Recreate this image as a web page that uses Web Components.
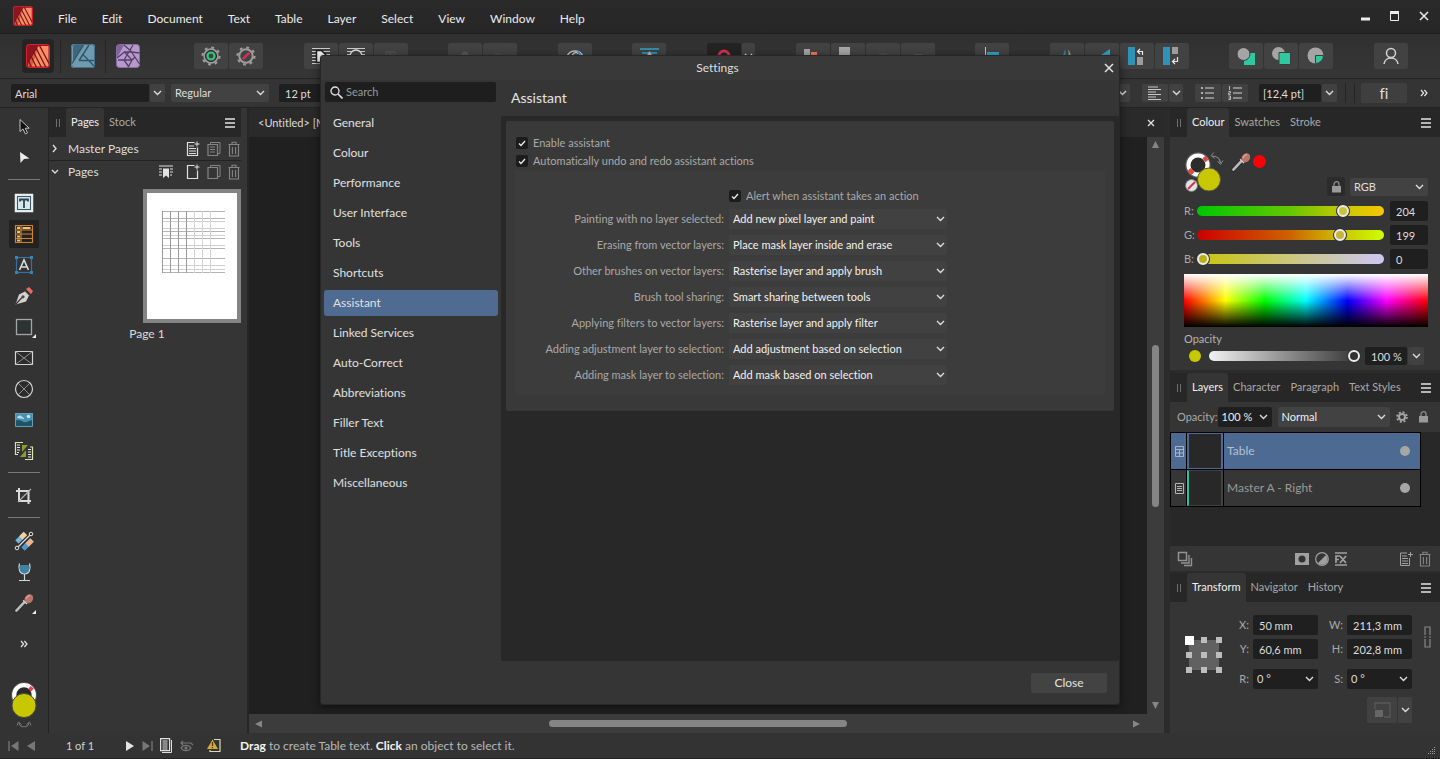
<!DOCTYPE html>
<html lang="en-GB">
<head>
<meta charset="utf-8">
<title>Settings</title>
<style>
html,body{height:100%}
body{margin:0;background:#333;color:#dedede;font:12px/16px Lato,"Open Sans",sans-serif;font-variant-ligatures:none;overflow:hidden}
</style>
</head>
<body>
<pub-app></pub-app>
<script>
const BASE = `
*,*::before,*::after{box-sizing:border-box}
:host{display:block;box-sizing:border-box}
button,input,select{font:inherit;color:inherit;border:0;margin:0;padding:0;background:none;border-radius:0;outline:0;min-width:0}
button{display:inline-flex;align-items:center;justify-content:center}
select{appearance:none}
svg{display:block;flex:none}
.pick{display:grid;background:#424242;border-radius:2px;height:18px;align-items:center}
.pick.dark{background:#1f1f1f}
.pick select{grid-area:1/1;width:100%;height:100%;padding:0 16px 0 4px}
.pick svg{grid-area:1/1;justify-self:end;margin-right:4px;pointer-events:none}
.fld{background:#1f1f1f;border-radius:2px;height:18px;padding:0 0 0 6px;width:100%}
`;

function define(tag, css, html) {
  customElements.define(tag, class extends HTMLElement {
    connectedCallback() {
      if (this.shadowRoot) return;
      const root = this.attachShadow({ mode: 'open' });
      const markup = typeof html === 'function' ? html(this) : html;
      root.innerHTML = `<style>${BASE}${css}</style>${markup}`;
    }
  });
}

const svg = (w, h, body, extra = '') =>
  `<svg width="${w}" height="${h}" viewBox="0 0 ${w} ${h}" fill="none" aria-hidden="true" ${extra}>${body}</svg>`;

const chevron = svg(9, 6, '<path d="M1 1l3.5 3.5L8 1" stroke="#dcdcdc" stroke-width="1.4"/>');
const more = svg(8, 8, '<path d="M1 1l2.6 3L1 7M4.4 1L7 4 4.4 7" stroke="#e6e6e6" stroke-width="1.2"/>');
const trash = svg(12, 16, '<path d="M.5 3.5h11M4 3V1.2h4V3M1.5 4v11h9V4M4.4 6v7M7.6 6v7" stroke="#858585" stroke-width="1.1"/>');
const lock = svg(9, 12, '<path d="M2 5V3.2a2.5 2.5 0 0 1 5 0V5" stroke="#8c8c8c" stroke-width="1.3"/><rect y="5" width="9" height="6.5" fill="#9a9a9a"/>');
const dropper = svg(20, 20, '<path d="M2.4 17.6l8-8.4" stroke="#2a2a2a" stroke-width="4" stroke-linecap="round"/><path d="M2.4 17.6l8-8.4" stroke="#b9bcbd" stroke-width="2.6" stroke-linecap="round"/><path d="M9.2 7.2l3.8 3.8" stroke="#d8d0cc" stroke-width="1.6"/><path d="M10.4 7.2C10.6 3.4 13.6.6 17 1.4c2.6.8 2.6 4.6 1 6.8-1.4 1.8-3.6 2.4-5 1.8z" fill="#b8766a"/><path d="M12 6c.6-1.8 2-3.2 4-3.4" stroke="#d9a396" stroke-width="1.3"/>');
const pubMark = (s) => svg(s, s, `<g transform="scale(${s / 24})"><rect width="24" height="24" rx="3" fill="#8c1620"/><path d="M12.5 2H22.5V22.5H4.5L2.5 20z" fill="#ff8a66"/><path d="M12.5 2L2 20v2.5h4z" fill="#e0583f"/><path d="M2.5 16.5l3 7M5 12l5.5 11.5M7.5 8l8 15.5M10 4l10 19.5M13.5 1.5L23 19.5" stroke="#6a1c14" stroke-width="1.3"/><rect x=".5" y=".5" width="23" height="23" rx="3" stroke="#d8232f"/></g>`);
const gear = (inner) => svg(20, 20, `<circle cx="10" cy="10" r="6.7" stroke="#9c9c9c" stroke-width="2"/><circle cx="10" cy="10" r="8.5" stroke="#9c9c9c" stroke-width="2.2" stroke-dasharray="2.8 3.875"/>${inner}`);

const pick = (value, { id = '', cls = '', label = '' }) =>
  `<span class="pick ${cls}"><select ${id ? `id="${id}"` : `aria-label="${label}"`}><option>${value}</option></select>${chevron}</span>`;
const field = (value, { id = '', cls = '', label = '' }) =>
  `<input type="text" class="fld ${cls}" ${id ? `id="${id}"` : `aria-label="${label}"`} value="${value}">`;

/* ---------- shared panel header ---------- */

define('panel-tabs', `
:host{display:flex;align-items:stretch;height:29px;background:#272727;font-size:11px;color:#a9a9a9;padding-right:9px}
.grip{width:17px;display:flex;align-items:center;justify-content:center;gap:2px}
.grip i{width:1px;height:8px;background:#6d6d6d}
button{padding:0 5px 2px}
button[aria-selected=true]{background:#353535;color:#f0f0f0;border-radius:3px 3px 0 0}
.menu{margin-left:auto;padding:0}
`, el => `<span class="grip"><i></i><i></i></span>${el.getAttribute('tabs').split(',').map((t, i) =>
  `<button role="tab" aria-selected="${i === 0}">${t}</button>`).join('')}
<button class="menu" aria-label="Panel menu">${svg(10, 10, '<path d="M0 1h10M0 5h10M0 9h10" stroke="#b4b4b4" stroke-width="2"/>')}</button>`);

/* ---------- title bar ---------- */

define('title-bar', `
:host{display:flex;align-items:center;height:34px;background:linear-gradient(#2a2a2a,#262626);border-bottom:1px solid #1e1e1e;padding:0 11px 0 13px}
nav{display:flex;gap:25px;margin:4px 0 0 25px}
nav button{color:#ececec}
.win{display:flex;gap:20px;margin:-2px 0 0 auto;align-items:center}
.logo{margin-top:-2px}
`, `<span class="logo">${pubMark(20)}</span>
<nav>${['File', 'Edit', 'Document', 'Text', 'Table', 'Layer', 'Select', 'View', 'Window', 'Help'].map(t => `<button>${t}</button>`).join('')}</nav>
<div class="win">
<button aria-label="Minimise">${svg(9, 10, '<path d="M0 8h9" stroke="#eee" stroke-width="3"/>')}</button>
<button aria-label="Maximise">${svg(9, 10, '<path d="M.5 1v8.5h8V1z" stroke="#eee"/><path d="M0 1.5h9" stroke="#eee" stroke-width="3"/>')}</button>
<button aria-label="Close window">${svg(10, 10, '<path d="M1 1l8 8M9 1L1 9" stroke="#eee" stroke-width="1.5"/>')}</button>
</div>`);

/* ---------- main toolbar ---------- */

const lines = c => `<path d="M1 2.5h18M1 5.5h18M1 8.5h18M1 11.5h18M1 14.5h18M1 17.5h18" stroke="${c}"/>`;
const TOOL_GROUPS = [
  [['Preflight', gear('<circle cx="10" cy="10" r="3.5" stroke="#2fc77c" stroke-width="2.2"/><circle cx="10" cy="10" r="5.5" stroke="#272727"/>')],
   ['Ignore issues', gear('<path d="M6.8 13.2l6.4-6.4" stroke="#d2304e" stroke-width="2.6"/>')]],
  [['Wrap square', svg(20, 20, lines('#c9c9c9') + '<path d="M5.5 4.5h5l5 5v7h-10z" fill="#efefef" stroke="#1d1d1d" stroke-width="1.5"/>')],
   ['Wrap tight', svg(20, 20, lines('#c9c9c9') + '<circle cx="10" cy="10" r="6" fill="#424242" stroke="#dedede" stroke-width="1.5"/>')],
   ['Wrap none', svg(20, 20, '<path d="M5 6h9v9H5zM8 8h3v4H8z" stroke="#565656"/>')]],
  [['Group', svg(20, 20, '<circle cx="10" cy="9" r="3.5" fill="#575757"/>')],
   ['Ungroup', svg(20, 20, '<path d="M4 8h6l3 3" stroke="#4d4d4d"/>')]],
  [['Preview mode', svg(20, 20, '<path d="M2 11c2-8 14-8 16 0M7 11c0-4 5-6 6-3" stroke="#c4c4c4" stroke-width="1.4"/><path d="M13 5l3 5" stroke="#3c9fc4" stroke-width="2"/>')]],
  [['Baseline grid', svg(20, 20, '<path d="M1 3h19M3 7h15" stroke="#2fa4cc" stroke-width="1.6"/><path d="M10.5 5l3 5h-6z" fill="#b5b5b5"/>')]],
  'snap',
  [['Move to back', svg(20, 20, '<path d="M1 3h6v6H1z" fill="#a5a5a5"/><path d="M8 6h6v8H8z" fill="#f07a58"/>')],
   ['Back one', svg(20, 20, '<path d="M1 1h11v12H1z" fill="#a5a5a5"/><path d="M12 9h5v4h-5z" fill="#c87262"/>')],
   ['Forward one', svg(20, 20, '<path d="M6 8h8" stroke="#515151"/>')],
   ['Move to front', svg(20, 20, '<path d="M6 8h8v2H6z" fill="#565656"/>')]],
  [['Alignment', svg(20, 20, '<path d="M3.5 1v17" stroke="#c4c4c4"/><path d="M5 6h12v5H5z" fill="#36a0c4"/>')]],
  [['Flip horizontal', svg(20, 20, '<path d="M8.5 3v14H3z" fill="#2f93b8"/><path d="M11.500 3v14H17z" fill="#9a9a9a"/>')],
   ['Flip vertical', svg(20, 20, '<path d="M18 3v10H3z" fill="#2fa4c8"/>')],
   ['Insert above', svg(20, 20, '<path d="M1 1h7v18H1z" fill="#2f93b8"/><path d="M10 11h6v8h-6z" fill="#9c9c9c"/><path d="M11 5.5h4.5V9M13 3l-2.5 2.500L13 8" stroke="#e8e8e8" stroke-width="1.2"/>')],
   ['Insert inside', svg(20, 20, '<path d="M1 1h7v18H1z" fill="#2f93b8"/><path d="M10 1h6v7h-6z" fill="#9c9c9c"/><path d="M15.5 11v4.5H11M13 13l-2.5 2.5L13 18" stroke="#e8e8e8" stroke-width="1.2"/>')]],
  [['Add', svg(20, 20, '<path d="M8 7h11v12H8z" fill="#2fc9a0"/><circle cx="7.5" cy="8" r="6.5" fill="#a5a5a5" stroke="#3c3c3c"/>')],
   ['Subtract', svg(20, 20, '<circle cx="7.5" cy="7.5" r="6.500" fill="#a5a5a5"/><path d="M8 6.5h11.5v12H8z" fill="#2fc9a0" stroke="#3c3c3c"/>')],
   ['Intersect', svg(20, 20, '<circle cx="9.5" cy="9.5" r="8" fill="#a5a5a5"/><path d="M9.5 9.5h8a8 8 0 0 1-8 8z" fill="#2fc9a0" stroke="#3c3c3c"/>')]],
  [['Account', svg(20, 20, '<circle cx="10" cy="7" r="4.5" stroke="#d4d4d4" stroke-width="1.5"/><path d="M3 18c1-8 13-8 14 0" stroke="#d4d4d4" stroke-width="1.5"/>')]]
];

define('tool-bar', `
:host{display:flex;align-items:center;height:45px;background:linear-gradient(#303030,#363636);border-bottom:1px solid #232323;padding:0 32px 0 16px}
.apps{display:flex;align-items:center;margin-right:44px}
.apps button{width:45px;height:34px;border-left:1px solid #262626}
.apps button:first-child{width:44px;border:0}
.apps .on{background:#242424;border-radius:4px;padding:5px 4px}
.groups{flex:1;display:flex;justify-content:space-between}
.g{display:flex;gap:1px}
.g button{width:34px;height:26px;background:#424242;border-radius:2px}
.g button.dark{background:#232323}.g button.thin{width:13px}
`, `<div class="apps">
<button aria-label="Publisher"><span class="on">${pubMark(24)}</span></button>
<button aria-label="Designer">${svg(24, 24, '<rect width="24" height="24" rx="3" fill="#6f9aaf"/><path d="M12.5 1L2 18V3l1-2z" fill="#3f667c"/><path d="M12.500 1L1 19.5M8 16.5h15.500M8 16.500L18 1M8 16.500l4-6 11.500 12" stroke="#31566b" stroke-width="1.400"/><rect x=".5" y=".5" width="23" height="23" rx="3" stroke="#43708a"/>')}</button>
<button aria-label="Photo">${svg(24, 24, '<rect x=".5" y=".5" width="23" height="23" rx="3" fill="#b79acb" stroke="#8c6da3"/><path d="M1 1h7L1 14z" fill="#7f6496"/><path d="M8 1l8 7M17 1L8 16M23.500 9l-8-1-7 0M23.500 20L15.500 8M2 16h14l3-3M13 23L8 16M1 14L8.500 8l7.500 8-4 7.500" stroke="#54406a" stroke-width="1.300"/>')}</button>
</div>
<div class="groups">${TOOL_GROUPS.map(g => g === 'snap'
  ? `<div class="g"><button class="dark" aria-label="Snapping">${svg(20, 20, '<path d="M5 15v-5a5 5 0 0 1 10 0v5" stroke="#d2304e" stroke-width="3"/>')}</button><button class="thin" aria-label="Snapping options">${chevron}</button></div>`
  : `<div class="g">${g.map(([n, i]) => `<button aria-label="${n}">${i}</button>`).join('')}</div>`).join('')}</div>`);

/* ---------- context toolbar ---------- */

define('context-bar', `
:host{display:flex;align-items:center;height:29px;background:#343434;border-bottom:1px solid #232323;padding:0 12px 0 11px;font-size:11px}
.font{display:flex;gap:1px;width:154px;margin-right:6px}
.fld{flex:1;padding-left:4px}
.b{height:18px;background:#414141;border-radius:2px;flex:none}
.c{width:15px}
.weight{width:98px}
.fld.size{flex:none;width:90px;margin-left:10px;padding-left:6px}
.right{display:flex;align-items:center;margin-left:auto}
.pair{display:flex;gap:1px;margin-left:12px}
.pair .b{width:26px}.pair .c{width:14px}
.lead{display:flex;gap:1px;width:78px;margin-left:11px}
hr{width:1px;height:20px;border:0;margin:0 0 0 8px;background:#242424}
.fi{width:46px;height:20px;margin-left:6px;background:#3f3f3f;font-size:15px}
.more{margin-left:13px}
`, `<div class="font">${field('Arial', { label: 'Font family' })}<button class="b c" aria-label="Font list">${chevron}</button></div>
${pick('Regular', { cls: 'weight', label: 'Font style' })}
${field('12 pt', { cls: 'size', label: 'Font size' })}
<div class="right">
<button class="b c" aria-label="Colour options">${chevron}</button>
<div class="pair"><button class="b" aria-label="Align left">${svg(14, 14, '<path d="M0 1h10M0 3.5h13M0 6h8M0 8.5h13M0 11h8M0 13.5h13" stroke="#c8c8c8" stroke-width="1.1"/>')}</button><button class="b c" aria-label="Alignment options">${chevron}</button></div>
<div class="pair"><button class="b" aria-label="Bullets">${svg(14, 14, '<path d="M4 2h9M4 7h9M4 12h9" stroke="#d4d4d4" stroke-width="1.2"/><path d="M0 2h2M0 7h2M0 12h2" stroke="#b0b0b0" stroke-width="2"/>')}</button><button class="b" aria-label="Numbering">${svg(14, 14, '<path d="M5 2h9M5 7h9M5 12h9" stroke="#d4d4d4" stroke-width="1.2"/><path d="M1.5 0v4M.5 5.5h2v1.5h-2v1.5h2M.5 10h2v3.5h-2M.5 12h2" stroke="#b8b8b8"/>')}</button></div>
<div class="lead">${field('[12,4 pt]', { label: 'Leading' })}<button class="b c" aria-label="Leading options">${chevron}</button></div>
<hr><hr>
<button class="b fi">fi</button>
<button class="more" aria-label="More">${more}</button>
</div>`);

/* ---------- left tool strip ---------- */

const TOOLS = [
  ['Move', svg(20, 20, '<path d="M6 2.5v12l3-2.6 2.3 5 2.2-1-2.3-4.7h4z" fill="#111" stroke="#c4c4c4"/>')],
  ['Node', svg(20, 20, '<path d="M6 4l9.5 6.5-5.5.5L6.5 15z" fill="#ededed"/>')],
  null,
  ['Frame text', svg(20, 20, '<rect x="1.5" y="1.5" width="17" height="17" fill="#dbe9ee" stroke="#e6f0f3" stroke-width="1.5"/><rect x="3.5" y="3.5" width="13" height="13" fill="#d5e6ec" stroke="#3e5560"/><path d="M6 6.5h8M6 5.5v3M14 5.5v3M10 6v9" stroke="#2c4552" stroke-width="1.8"/>')],
  ['Table', svg(20, 20, '<path d="M1.5 1.5h17v17h-17zM1.5 6h17M1.5 10h17M1.5 14.5h17M7 1.5v17" stroke="#cf8234" stroke-width="1.2"/><path d="M3 2.7h3v2.3H3zM3 7h3v2H3zM3 11.5h3v2H3zM3 15.5h3v2H3zM8.500 3h8v2h-8z" fill="#f2c45a"/>'), 1],
  ['Artistic text', svg(20, 20, '<rect x="2.5" y="2.5" width="15" height="15" stroke="#35719c" stroke-width="1.2"/><path d="M1 1h3v3H1zM16 1h3v3h-3zM1 16h3v3H1zM16 16h3v3h-3z" fill="#3c83b4"/><path d="M5.5 15L10 5l4.5 10M7 12h6" stroke="#dcdcdc" stroke-width="1.6"/>')],
  ['Pen', svg(20, 20, '<path d="M1.5 18.5L5 8.5l6-3 4 4-3 6z" fill="#d5d3cd"/><path d="M2 18l6-6.5" stroke="#333" stroke-width="1.2"/><circle cx="9" cy="10.8" r="1.6" fill="#4a4a4a"/><path d="M12 3l3-2 4 4-2 3.3z" fill="#ea6a64"/><path d="M10.5 4.5l5.2 5.2" stroke="#555"/>')],
  ['Rectangle', svg(20, 20, '<rect x="2.5" y="2.5" width="15" height="15" fill="#2d3233" stroke="#a5a5a5" stroke-width="1.3"/>'), 0, 1],
  ['Picture frame rectangle', svg(20, 20, '<path d="M1.500 3.500h17v13h-17z" fill="#2b2b2b" stroke="#d4d4d4" stroke-width="1.2"/><path d="M1.5 3.5l17 13M18.5 3.5l-17 13" stroke="#9c9c9c" stroke-width=".9"/>')],
  ['Picture frame ellipse', svg(20, 20, '<circle cx="10" cy="10" r="8.5" fill="#2b2b2b" stroke="#d4d4d4" stroke-width="1.2"/><path d="M4 4l12 12M16 4L4 16" stroke="#9c9c9c" stroke-width=".9"/>')],
  ['Place image', svg(20, 20, '<path d="M1 3h18v14H1z" fill="#4a90b2"/><path d="M1 11c5-3 7 2 11 1s5-2 7-2v7H1z" fill="#1d5566"/><path d="M3 8c1-3 4-3 5-1 2 0 2 2 2 2z" fill="#b9dcec"/><circle cx="14.5" cy="6.5" r="1.8" fill="#c6e6f4"/><path d="M1.500 3.500h17v13h-17z" stroke="#6a9db5"/>')],
  ['Data merge', svg(20, 20, '<path d="M9 1.5H1.5v12H4M11 18.5h7.5V6H16" stroke="#dfe3b0" stroke-width="1.2"/><path d="M3 4h3M3 6.5h3M3 9h3M3 11.5h2M14 8.5h3M14 11h3M14 13.5h3M14 16h3" stroke="#e8e8e8"/><path d="M8 4h6L8 11zM12 9v7H6z" fill="#8d9c2c"/>')],
  null,
  ['Crop', svg(20, 20, '<path d="M5 2v13h12M2 5h12.5v13" stroke="#dadada" stroke-width="2"/><path d="M4 16L17 3" stroke="#b5b5b5" stroke-width="1.1"/>')],
  null,
  ['Fill', svg(20, 20, '<path d="M3 11l8-8" stroke="#72b6df" stroke-width="5"/><path d="M7 7l4.500-4.500" stroke="#f1cf9e" stroke-width="5"/><path d="M9 18l9-9" stroke="#4a9bd0" stroke-width="5"/><path d="M13 14l5-5" stroke="#eab68c" stroke-width="5"/><path d="M3 17L17 3" stroke="#2c2c2c" stroke-width="3.5"/><path d="M3.5 16.5l13-13" stroke="#e3e3e3" stroke-width="1.2"/><circle cx="3" cy="17" r="1.8" fill="#333" stroke="#e3e3e3"/><circle cx="17" cy="3" r="1.8" fill="#333" stroke="#e3e3e3"/>')],
  ['Transparency', svg(20, 20, '<path d="M6.5 3h8c1.500 4 .5 8.500-4 8.500S5 7 6.500 3z" fill="#3d84a3"/><path d="M5.5 1.500C4 7 5.5 12 10.500 12s6.500-5 5-10.500M10.500 12v6M5 18.500h11" stroke="#cfd9dc" stroke-width="1.2"/>')],
  ['Colour picker', dropper, 0, 1]
];

define('tool-strip', `
:host{display:flex;flex-direction:column;align-items:center;background:#333;border-right:1px solid #232323;padding-top:3px}
button{width:32px;height:31px;position:relative;flex:none}
.on{background:linear-gradient(#222,#222) center/30px 28px no-repeat}
.fly::after{content:"";position:absolute;right:4px;bottom:4px;border:2px solid transparent;border-right-color:#eee;border-bottom-color:#eee}
hr{width:32px;height:1px;border:0;margin:6px 0 7px;background:#787878;flex:none}
.more{margin-top:10px}
.sw{margin:21px 0 0}
`, TOOLS.map(t => t ? `<button class="${t[2] ? 'on' : ''} ${t[3] ? 'fly' : ''}" aria-label="${t[0]}">${t[1]}</button>` : '<hr>').join('') +
`<button class="more" aria-label="More tools">${more}</button>
<div class="sw">${svg(28, 50, '<circle cx="14" cy="15" r="10" stroke="#5b5b5b" stroke-width="5.5"/><circle cx="14" cy="15" r="9.800" fill="#2a2a2a" stroke="#fff" stroke-width="4.2"/><path d="M19.5 7.5l3 2.5" stroke="#ef4040" stroke-width="4"/><circle cx="14" cy="25.500" r="12" fill="#c8c800" stroke="#4c4c3a"/><path d="M9 43c1 5 9 5 10 0" stroke="#777" stroke-width="1.2"/><path d="M7 45.5l1.5-3.5 3 2.5M21 45.5L19.5 42l-3 2.5" stroke="#777"/>')}</div>`);

/* ---------- pages panel ---------- */

const pageAdd = body => svg(14, 16, `<path d="M8.5 1.5h-7v13h10V6.5" stroke="#e2e2e2" stroke-width="1.2"/><path d="M11 .5v5M8.5 3h5" stroke="#e2e2e2"/>${body}`);
const pageDup = body => svg(14, 16, `<path d="M3.5 3.5V1.5h9.500v11h-2.500" stroke="#858585"/><path d="M1 3.5h9.5v11H1z" stroke="#858585" stroke-width="1.2"/>${body}`);
define('pages-panel', `
:host{background:#353535;padding-right:6px;border-right:2px solid #262626}
panel-tabs{width:100%;padding-right:6px}
.row{display:flex;align-items:center;gap:7px;height:24px;padding:0 1px 0 2px;border-bottom:1px solid #222}
.row.open{border:0;height:21px}
.row span{flex:1}.row svg:first-child{margin-right:2px}
.spread{display:flex;flex-direction:column;align-items:flex-end;margin-top:7px}
.thumb{border:4px solid #848484;background:#fff;width:98px;height:134px;padding:18px 0 0 15px}
.label{align-self:center;margin:3px 0 0 4px}
`, `<panel-tabs tabs="Pages,Stock"></panel-tabs>
<div class="row">${svg(8, 9, '<path d="M2 1l3 3.5L2 8" stroke="#dcdcdc" stroke-width="1.4"/>')}<span>Master Pages</span>
${pageAdd('<path d="M3 5h5M3 7.5h7M3 10h7M3 12.5h7" stroke="#e2e2e2"/>')}${pageDup('<path d="M3 6h5M3 8.5h5M3 11h5" stroke="#858585"/>')}${trash}</div>
<div class="row open">${svg(8, 6, '<path d="M1 1l3 3 3-3" stroke="#dcdcdc" stroke-width="1.4"/>')}<span>Pages</span>
${svg(20, 16, '<path d="M0 2h14M0 5h3M0 8h3M0 11h3M11 5h3M11 8h3M11 11h2" stroke="#e2e2e2" stroke-width="1.2"/><path d="M4 4.5h6V14l-3-2.5L4 14z" fill="#e2e2e2"/>')}${pageAdd('')}${pageDup('')}${trash}</div>
<div class="spread"><div class="thumb">${svg(66, 62, '<path d="M0 .5h63M0 7.5h63M0 20.5h63M0 27.5h63M0 37.5h63M0 47.5h63M0 61.5h63" stroke="#b4b4b4"/><path d="M0 10.5h63M0 17.5h63M0 24.5h63M0 34.5h63M0 54.500h63M0 58.5h63" stroke="#cfcfcf"/><path d="M.5 0v62M8.500 0v62M16.5 0v62M24.5 0v62" stroke="#9a9a9a"/><path d="M32.5 0v62M40.5 0v62M48.5 0v62" stroke="#d4d4d4"/>')}</div>
<span class="label">Page 1</span></div>`);

/* ---------- document view ---------- */

define('doc-view', `
:host{display:grid;grid-template:29px 1fr 19px/1fr 17px;background:#202020;border-right:6px solid #2b2b2b}
.tab{grid-column:1/3;display:flex;align-items:center;justify-content:space-between;padding:0 9px;font-size:11px;background:#2a2a2a}
.v,.h{display:flex;align-items:center;justify-content:space-between;background:#3c3c3c}
.v{flex-direction:column;padding:4px 0}
.h{grid-column:1/3;padding:0 24px 0 6px}
.v i{width:7px;height:162px;border-radius:4px;background:#858585}
.h i{width:298px;height:7px;border-radius:4px;background:#858585}
span{flex:1}
.tab span{flex:none}
`, `<div class="tab"><span>&lt;Untitled&gt; [M</span><button aria-label="Close document">${svg(8, 8, '<path d="M1 1l6 6M7 1L1 7" stroke="#e2e2e2" stroke-width="1.3"/>')}</button></div>
<div></div>
<div class="v">${svg(7, 8, '<path d="M0 7h7L3.5 0z" fill="#868686"/>')}<span></span><i></i><span></span>${svg(7, 8, '<path d="M0 0h7L3.5 7z" fill="#868686"/>')}</div>
<div class="h">${svg(7, 8, '<path d="M7 .5v7L0 4z" fill="#868686"/>')}<span></span><i></i><span></span>${svg(7, 8, '<path d="M0 .5v7L7 4z" fill="#868686"/>')}</div>`);

/* ---------- colour panel ---------- */

define('colour-panel', `
:host{background:#353535;font-size:11px}
.body{padding:15px 12px 5px 14px}
.top{display:flex;align-items:flex-start;height:47px}
.eye{margin-left:7px}
.dot{width:13px;height:13px;border-radius:50%;background:#fb0207;margin:3px 0 0 2px}
.lock{width:18px;height:19px;background:#2b2b2b;border-radius:2px;margin:25px 5px 0 auto}
.top .pick{width:78px;margin-top:26px}
.ch{display:grid;grid-template-columns:13px 1fr 38px;align-items:center;height:24px;color:#a9a9a9}
.ch .fld{color:#dedede;height:20px}
input[type=range]{appearance:none;height:10px;border-radius:5px;background:var(--track)}
.ch input[type=range]{margin-right:6px}
input[type=range]::-webkit-slider-thumb{appearance:none;width:12px;height:12px;border-radius:50%;background:var(--thumb);border:2px solid #ececec;box-shadow:0 0 0 1px #333}
#r{--track:linear-gradient(90deg,#00c700,#66c700 50%,#ccc700 80%,#f7c700);--thumb:#c8c43c}
#g{--track:linear-gradient(90deg,#c00,#cc6400 50%,#ccc700 78%,#cf0);--thumb:#c8b43c}
#b{--track:linear-gradient(90deg,#c8c40a,#ccc766 40%,#ccc7f5);--thumb:#b8b414}
#o{--track:linear-gradient(90deg,#f2f2f2,#9a9a9a 45%,#333);--thumb:#333}
.spec{height:53px;margin-top:3px;background:linear-gradient(#fff,#fff0 50%,#0000 50%,#000),linear-gradient(90deg,red,#ff0 17%,#0f0 33%,#0ff 50%,#00f 67%,#f0f 83%,red)}
label.op{display:block;margin-top:3px;line-height:17px;color:#b4b4b4}
.oprow{display:flex;align-items:center;height:18px}
.oprow .y{width:12px;height:12px;border-radius:50%;background:#c8c800;margin:0 8px 0 5px}
.oprow input[type=range]{flex:1;margin-right:5px}
.oprow .fld{width:42px}
.oprow button{width:16px;height:18px;background:#414141;margin:0 4px 0 1px;border-radius:2px}
`, `<panel-tabs tabs="Colour,Swatches,Stroke"></panel-tabs>
<div class="body"><div class="top">
${svg(40, 42, '<circle cx="14" cy="13" r="10" stroke="#5c5c5c" stroke-width="5.5"/><circle cx="14" cy="13" r="9.5" fill="#2c2c2c" stroke="#fff" stroke-width="4"/><path d="M20 5l3 4M5 17.5l4 4" stroke="#e8443c" stroke-width="4"/><circle cx="7.5" cy="33.5" r="6" fill="#e2e2e2" stroke="#777"/><path d="M4 37l7-7" stroke="#d2304e" stroke-width="2"/><circle cx="25" cy="27.5" r="11.5" fill="#c8c800" stroke="#55553a"/><path d="M28 4c5 0 8 3 8.500 7" stroke="#888" stroke-width="1.2"/><path d="M30 .5L27 3.5l3.5 3M33.5 9l3 3.5 2.5-4" stroke="#888"/>')}
<button class="eye" aria-label="Colour picker">${dropper}</button><span class="dot"></span>
<button class="lock" aria-label="Lock">${lock}</button>
${pick('RGB', { label: 'Colour model' })}</div>
<div class="ch"><label for="r">R:</label><input id="r" type="range" max="255" value="204">${field('204', { label: 'Red' })}</div>
<div class="ch"><label for="g">G:</label><input id="g" type="range" max="255" value="199">${field('199', { label: 'Green' })}</div>
<div class="ch"><label for="b">B:</label><input id="b" type="range" max="255" value="0">${field('0', { label: 'Blue' })}</div>
<div class="spec"></div>
<label class="op" for="o">Opacity</label>
<div class="oprow"><span class="y"></span><input id="o" type="range" value="100">${field('100 %', { label: 'Opacity value' })}<button aria-label="Opacity options">${chevron}</button></div>
</div>`);

/* ---------- layers panel ---------- */

define('layers-panel', `
:host{background:#353535;font-size:11px;border-top:3px solid #2b2b2b}
.opts{display:flex;align-items:center;height:30px;padding:0 8px 0 7px;color:#a9a9a9}
.opts .pick{color:#f0f0f0;height:20px}
.o{width:54px}.m{flex:1;margin:0 6px}
.opts button{margin-right:7px}.opts button:last-child{margin:0;width:17px}
ul{list-style:none;margin:0;padding:0 19px 39px 0;background:#282828}
li{display:grid;grid-template-columns:16px 36px 1fr 30px;height:37px;align-items:center;background:#363636;border:1px solid #000;border-top:0;color:#9a9a9a;font-size:12px}
li:first-child{background:#4d6a92;height:38px;border-top:1px solid #000;color:#b3c1d3}
li>svg{justify-self:center}
.t{height:100%;background:#282828;border:1px solid #424242;border-width:1px 2px;outline:1px solid #000}
li:first-child .t{border-color:#4d6a92}
li:last-child .t{border-left:2px solid #30c29a}
li span{padding-left:4px}
li b{width:10px;height:10px;border-radius:50%;background:#a5a8a5;justify-self:center}
footer{display:flex;align-items:center;height:25px;padding:0 9px 0 7px;gap:6px}
footer button:nth-child(2){margin-left:auto}footer button:nth-child(5){margin-left:46px}
`, `<panel-tabs tabs="Layers,Character,Paragraph,Text Styles"></panel-tabs>
<div class="opts"><label for="op">Opacity:</label>${pick('100 %', { id: 'op', cls: 'o dark' })}${pick('Normal', { cls: 'm', label: 'Blend mode' })}
<button aria-label="Blend options">${svg(12, 12, '<circle cx="6" cy="6" r="3" stroke="#a5a5a5" stroke-width="2"/><circle cx="6" cy="6" r="4.9" stroke="#a5a5a5" stroke-width="1.8" stroke-dasharray="2 1.85"/>')}</button><button aria-label="Lock layer">${lock}</button></div>
<ul><li>${svg(9, 11, '<path d="M.5.5h8v10h-8zM.5 3.5h8M.5 7h8M4.5 3.5v7" stroke="#a9b4c2"/>')}<div class="t"></div><span>Table</span><b></b></li>
<li>${svg(9, 11, '<path d="M.5.5h8v10h-8zM2 3.5h5M2 5.5h5M2 7.5h5" stroke="#b4b4b4"/>')}<div class="t"></div><span>Master A - Right</span><b></b></li></ul>
<footer><button aria-label="Layer stack">${svg(16, 16, '<path d="M1.5 1.5h8v8h-8z" stroke="#929292" stroke-width="1.5"/><path d="M4 12h8V4M7 14.5h7.5V7" stroke="#929292" stroke-width="1.4"/>')}</button>
<button aria-label="Mask">${svg(14, 12, '<path d="M0 0h14v12H0z" fill="#a0a0a0"/><circle cx="7" cy="6" r="3.5" fill="#333"/>')}</button>
<button aria-label="Adjustment">${svg(14, 14, '<circle cx="7" cy="7" r="6.3" stroke="#a0a0a0" stroke-width="1.2"/><path d="M11 3a5.6 5.6 0 0 1-8 8z" fill="#a0a0a0"/>')}</button>
<button aria-label="Layer effects">${svg(12, 14, '<path d="M0 1h12M0 13h12M1 11V4h4M1 7.5h3M5 4l6 7M11 4l-6 7" stroke="#a0a0a0" stroke-width="1.7"/>')}</button>
<button aria-label="Add layer">${svg(14, 16, '<path d="M8 2H1.5v12.5h9V7M3 5h5M3 7.5h6M3 10h6M3 12.5h6M11.5 1v5M9 3.5h5" stroke="#a0a0a0"/>')}</button>
<button aria-label="Delete layer">${trash}</button></footer>`);

/* ---------- transform panel ---------- */

const anchors = [5, 20, 35].map(y => [5, 20, 35].map(x => `<rect x="${x - 3}" y="${y - 3}" width="6" height="6" fill="#bdbdbd"/>`).join('')).join('');
define('transform-panel', `
:host{background:#353535;font-size:11px;border-top:2px solid #2b2b2b}
.body{display:grid;grid-template-columns:40px 21px 65px 1fr 65px 24px;column-gap:4px;align-items:center;padding:11px 0 10px 14px;grid-template-rows:24px 24px 36px 26px}
.a{grid-row:1/4}
.body label{text-align:right;color:#a9a9a9}
.body .l{grid-column:2}
.fld,.pick{height:20px}
.link{grid-column:6;grid-row:1/3;justify-self:center}
.act{grid-column:4/6;grid-row:4;justify-self:end;display:flex;gap:1px}
.act button{width:30px;height:26px;background:#414141;border-radius:2px}
.act button+button{width:14px}
`, `<panel-tabs tabs="Transform,Navigator,History"></panel-tabs>
<div class="body">
<button class="a" aria-label="Anchor point">${svg(40, 40, `<path d="M5 5h30v30H5z" fill="#616161"/>${anchors}<path d="M1 1h9v9H1z" fill="#fff"/>`)}</button>
<label class="l" for="x">X:</label>${field('50 mm', { id: 'x' })}<label for="w">W:</label>${field('211,3 mm', { id: 'w' })}
<button class="link" aria-label="Lock aspect ratio">${svg(8, 22, '<path d="M1 9V1h5v8M1 13v8h5v-8M0 11h2M5 11h2" stroke="#868686" stroke-width="1.2"/>')}</button>
<label class="l" for="y">Y:</label>${field('60,6 mm', { id: 'y' })}<label for="h">H:</label>${field('202,8 mm', { id: 'h' })}
<label class="l" for="rot">R:</label>${pick('0 °', { id: 'rot', cls: 'dark' })}<label for="sh">S:</label>${pick('0 °', { id: 'sh', cls: 'dark' })}
<div class="act"><button aria-label="Scale mode">${svg(17, 16, '<path d="M1 7V1h15v14h-6" stroke="#585858" stroke-width="1.3"/><path d="M1 8h8v7H1z" fill="#666"/>')}</button><button aria-label="Scale options">${chevron}</button></div>
</div>`);

/* ---------- status bar ---------- */

define('status-bar', `
:host{display:flex;align-items:center;height:26px;background:#333;border-bottom:1px solid #222;padding:0 4px;color:#b8b8b8}
.nav{display:flex;align-items:center}
.pg{width:80px;text-align:center;color:#d4d4d4;font-size:11px}
.nav button{width:18px;height:18px}
.ic{display:flex;gap:7px;margin:0 19px 0 4px;align-items:center}
.ic button:last-child{margin-left:6px}
b{color:#f4f4f4}
.grip{margin:8px 0 0 auto}
`, `<div class="nav"><button aria-label="First page">${svg(11, 10, '<path d="M1 0v10" stroke="#777" stroke-width="1.3"/><path d="M10.5 0v10L3 5z" fill="#777"/>')}</button><button aria-label="Previous page">${svg(10, 10, '<path d="M9 0v10L1 5z" fill="#777"/>')}</button>
<span class="pg">1 of 1</span>
<button aria-label="Next page">${svg(9, 12, '<path d="M1 1v10l8-5z" fill="#e4e4e4"/>')}</button><button aria-label="Last page">${svg(11, 10, '<path d="M10 0v10" stroke="#777" stroke-width="1.3"/><path d="M.5 0v10L8 5z" fill="#777"/>')}</button></div>
<div class="ic"><button aria-label="Page list">${svg(13, 15, '<path d="M.6.6h9v12h-9z" stroke="#dedede" stroke-width="1.2"/><path d="M2.5 3h5M2.5 5h5M2.5 7h5M2.5 9h5M2.5 11h5M11.5 2v12.5H2" stroke="#dedede"/>')}</button>
<button aria-label="Visibility">${svg(14, 12, '<path d="M3 1L1 3l2 2M1 3h10l2 2M1 8c2-3.5 8-3.5 10 0-2 3.5-8 3.5-10 0z" stroke="#777" stroke-width="1.2"/><circle cx="6" cy="8" r="1.6" fill="#777"/>')}</button>
<button aria-label="Preflight warnings">${svg(14, 15, '<path d="M7 1.5h6v12H3V12" stroke="#dcdcb8" stroke-width="1.2"/><path d="M5.5 1.5l5.5 9.5H0z" fill="#d8a838"/><path d="M5.5 4v4M5.5 9v1.2" stroke="#4a3a10" stroke-width="1.3"/>')}</button></div>
<span><b>Drag</b> to create Table text. <b>Click</b> an object to select it.</span>
<span class="grip">${svg(8, 8, '<path d="M6 1.5h1M4 3.5h1M6 3.5h1M2 5.5h1M4 5.5h1M6 5.5h1M0 7.5h1M2 7.5h1M4 7.5h1M6 7.5h1" stroke="#a0a0a0"/>')}</span>`);

/* ---------- settings dialog ---------- */

define('check-row', `
label{display:flex;align-items:center;gap:5px;height:18px;color:#a9a9a9}
span{display:grid;background:#1c1c1c;border-radius:2px}
input{appearance:none;grid-area:1/1;width:12px;height:12px}
svg{grid-area:1/1;align-self:center;justify-self:center;pointer-events:none;visibility:hidden}
input:checked+svg{visibility:visible}
`, `<label><span><input type="checkbox" checked>${svg(8, 7, '<path d="M1 3.5L3 5.5 7 1" stroke="#ececec" stroke-width="1.3"/>')}</span><slot></slot></label>`);

define('assistant-page', `
:host{background:#393939;padding:13px 9px 16px;font-size:11px;border-radius:2px}
.first{padding-left:1px}
.group{background:#3c3c3c;padding:17px 0 7px;display:grid;grid-template-columns:209px 218px;column-gap:5px}
.group check-row{grid-column:2;margin-bottom:1px}
.r{grid-column:1/3;display:grid;grid-template-columns:subgrid;align-items:center;height:26px;color:#a9a9a9}
.r label{text-align:right}
.r .pick{color:#f2f2f2;background:#414141;height:20px}
.r svg{margin-right:2px}
`, `<div class="first"><check-row>Enable assistant</check-row><check-row>Automatically undo and redo assistant actions</check-row></div>
<div class="group"><check-row>Alert when assistant takes an action</check-row>
${[['Painting with no layer selected:', 'Add new pixel layer and paint'],
   ['Erasing from vector layers:', 'Place mask layer inside and erase'],
   ['Other brushes on vector layers:', 'Rasterise layer and apply brush'],
   ['Brush tool sharing:', 'Smart sharing between tools'],
   ['Applying filters to vector layers:', 'Rasterise layer and apply filter'],
   ['Adding adjustment layer to selection:', 'Add adjustment based on selection'],
   ['Adding mask layer to selection:', 'Add mask based on selection']].map(([l, v], i) =>
  `<div class="r"><label for="s${i}">${l}</label>${pick(v, { id: 's' + i })}</div>`).join('')}</div>`);

define('settings-dialog', `
:host{display:grid;grid-template:24px 1fr 43px/180px 1fr;width:800px;max-width:100%;background:#353535;border:1px solid #272727;border-radius:3px;box-shadow:0 2px 8px #0008}
header{grid-column:1/3;display:grid;grid-template-columns:1fr auto 1fr;align-items:center;background:#393939;padding-right:5px;color:#dedede}
header button{justify-self:end}
header h1{font:inherit;margin:0}
aside{padding:2px 0 0 4px;grid-row:2/4}
.search{display:flex;align-items:center;gap:3px;background:#1e1e1e;height:20px;width:171px;padding-left:5px;border-radius:2px;font-size:11px}
.search input{flex:1}.search input::placeholder{color:#9a9a9a;opacity:1}
ul{list-style:none;margin:8px 0 0 -1px;padding:0;display:grid;gap:4px}
li a{display:block;width:174px;line-height:26px;padding-left:9px;color:#e0e0e0;text-decoration:none;border-radius:3px}
li a[aria-current]{background:#4f6b92}
main{display:flex;flex-direction:column;min-height:0}
h2{font-size:14px;line-height:36px;font-weight:400;margin:0 0 0 10px;color:#e4e4e4}
.frame{flex:1;background:#282828;padding:5px;border-radius:2px}
footer{display:flex;justify-content:flex-end;align-items:center;padding-right:12px}
footer button{width:76px;height:20px;background:#434343;border-radius:2px;color:#e4e4e4}
`, `<header><span></span><h1>Settings</h1><button aria-label="Close settings">${svg(10, 10, '<path d="M1 1l8 8M9 1L1 9" stroke="#e2e2e2" stroke-width="1.5"/>')}</button></header>
<aside><div class="search">${svg(13, 13, '<circle cx="5" cy="5" r="4" stroke="#e2e2e2" stroke-width="1.3"/><path d="M8 8l4.5 4.5" stroke="#e2e2e2" stroke-width="1.6"/>')}<input type="search" placeholder="Search" aria-label="Search settings"></div>
<ul>${['General', 'Colour', 'Performance', 'User Interface', 'Tools', 'Shortcuts', 'Assistant', 'Linked Services', 'Auto-Correct', 'Abbreviations', 'Filler Text', 'Title Exceptions', 'Miscellaneous'].map(t =>
  `<li><a href="#${t.toLowerCase().replace(/ /g, '-')}"${t === 'Assistant' ? ' aria-current="page"' : ''}>${t}</a></li>`).join('')}</ul></aside>
<main><h2>Assistant</h2><div class="frame"><assistant-page></assistant-page></div></main>
<footer><button>Close</button></footer>`);

/* ---------- shell ---------- */

define('pub-app', `
:host{display:flex;flex-direction:column;height:100vh;position:relative}
.work{flex:1;min-height:0;display:grid;grid-template-columns:49px 200px 1fr 270px;background:#333}
.dock{display:flex;flex-direction:column;min-height:0;background:#353535}
transform-panel{flex:1}
.modal{position:absolute;inset:55px 0 54px;display:flex;justify-content:center;pointer-events:none}
.modal>*{pointer-events:auto}
`, `<title-bar></title-bar><tool-bar></tool-bar><context-bar></context-bar>
<div class="work"><tool-strip></tool-strip><pages-panel></pages-panel><doc-view></doc-view>
<div class="dock"><colour-panel></colour-panel><layers-panel></layers-panel><transform-panel></transform-panel></div></div>
<status-bar></status-bar>
<div class="modal"><settings-dialog></settings-dialog></div>`);
</script>
</body>
</html>
